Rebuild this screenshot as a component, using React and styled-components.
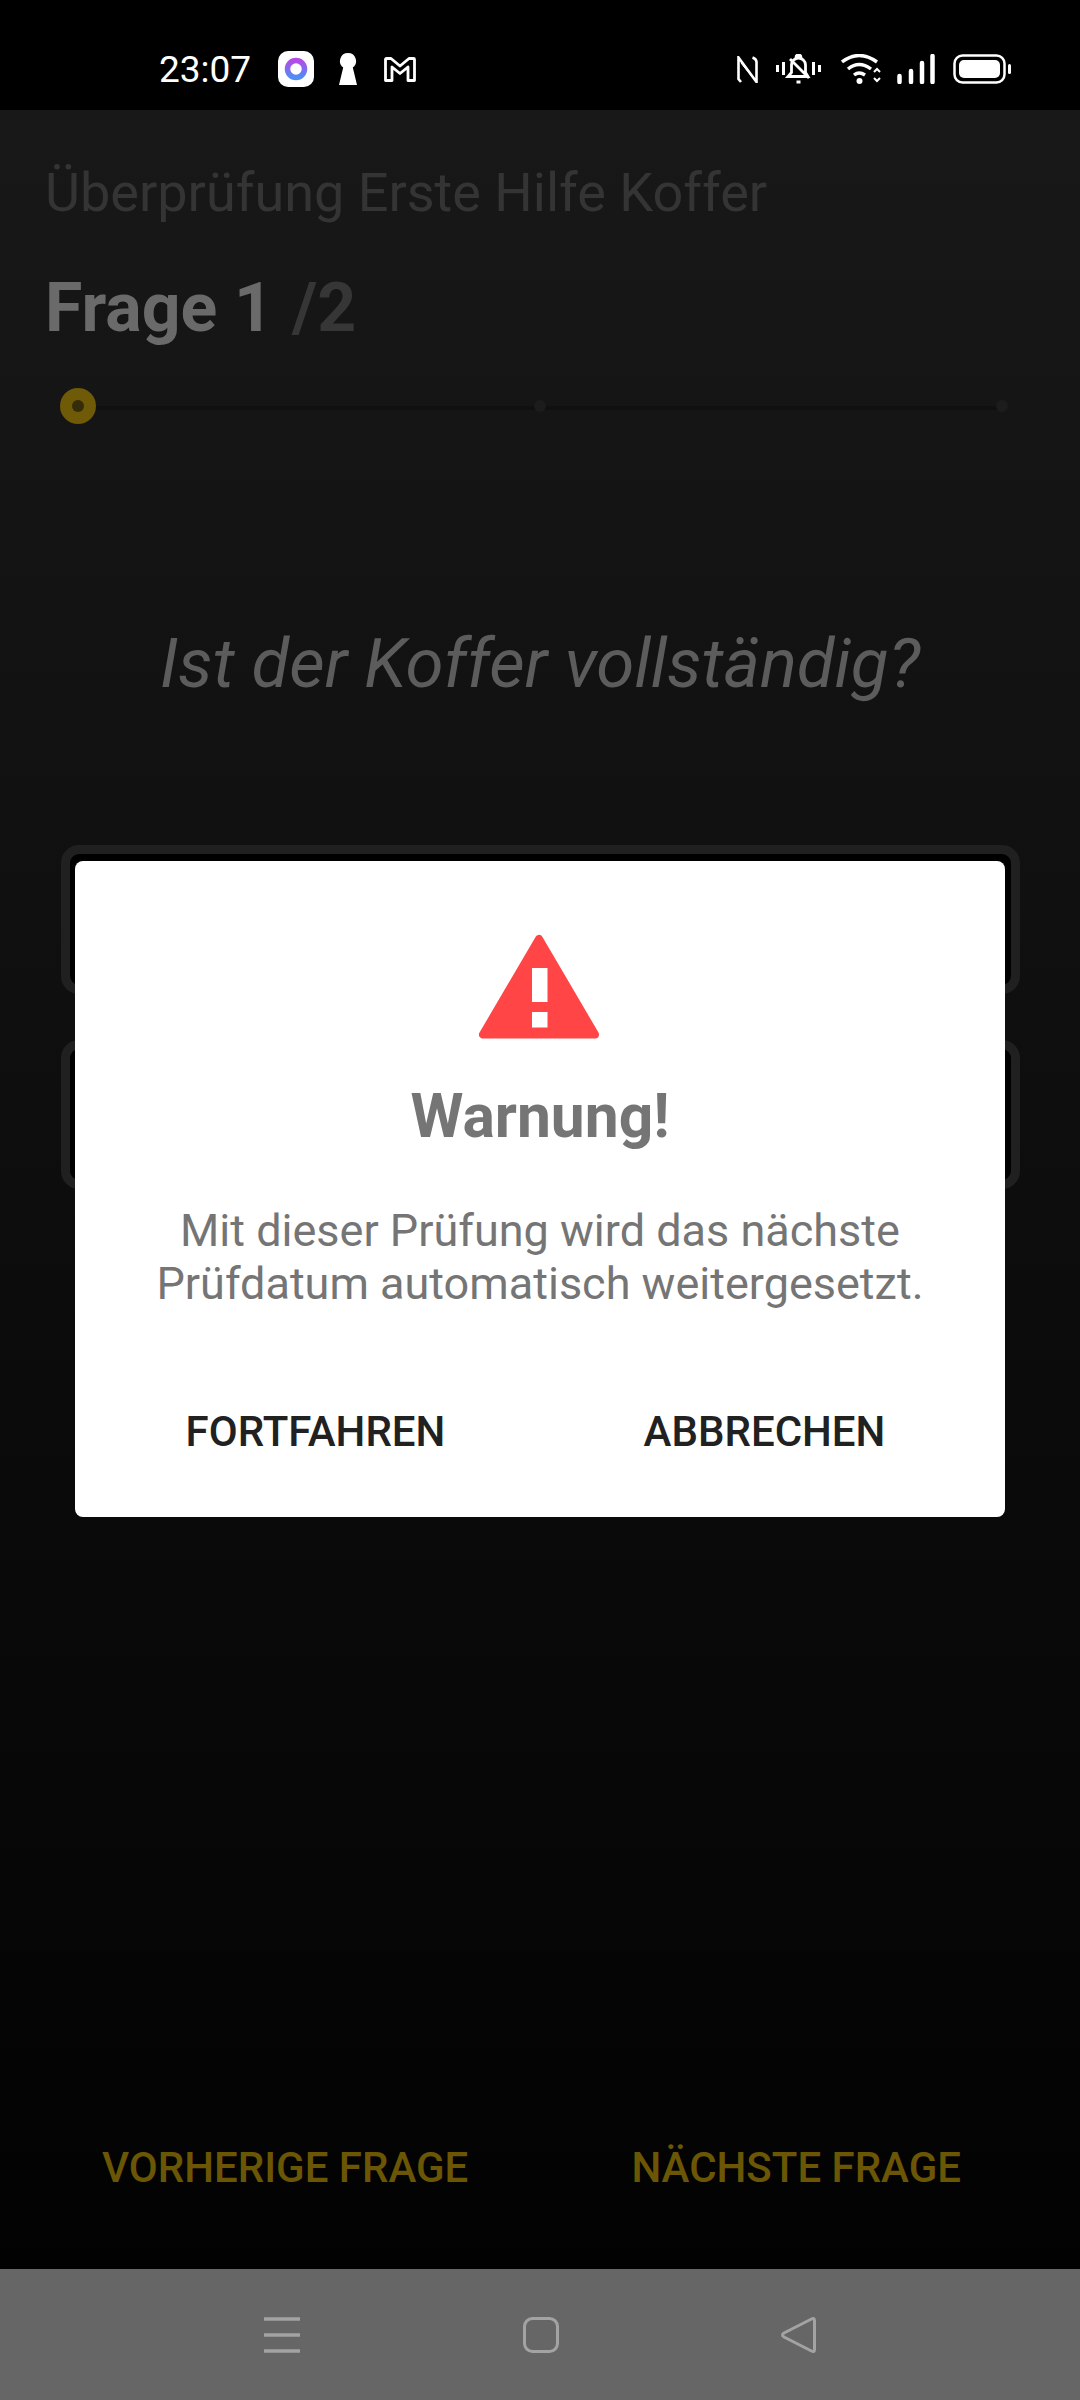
import React from "react";
import styled, { createGlobalStyle } from "styled-components";

const Global = createGlobalStyle`
  html, body { margin: 0; padding: 0; background: #000; }
  * { box-sizing: border-box; }
`;

const Screen = styled.div`
  width: 1080px;
  height: 2400px;
  display: flex;
  flex-direction: column;
  font-family: Roboto, "Liberation Sans", sans-serif;
  overflow: hidden;
`;

const StatusBar = styled.div`
  height: 110px;
  flex: none;
  background: #000;
  display: flex;
  align-items: center;
  justify-content: space-between;
  padding: 28px 69px 0 159px;
  color: #fff;
`;

const StatusGroup = styled.div`
  display: flex;
  align-items: center;
`;

const Clock = styled.span`
  font-size: 37px;
  font-weight: 400;
  width: 119px;
`;

const Main = styled.main`
  position: relative;
  flex: 1;
  background: linear-gradient(180deg, #181818 0%, #020202 100%);
  display: flex;
  flex-direction: column;
`;

const Title = styled.h1`
  margin: 53px 0 0 45px;
  font-size: 54px;
  line-height: 60px;
  font-weight: 400;
  color: #343434;
`;

const QuestionCount = styled.div`
  margin: 45px 0 0 45px;
  font-size: 68px;
  line-height: 80px;
  font-weight: 700;
  color: #6a6a6a;
  span { color: #363636; margin-left: 2px; }
`;

const Progress = styled.div`
  position: relative;
  margin: 40px 60px 0 60px;
  height: 36px;
  display: flex;
  align-items: center;
  justify-content: space-between;
  &::before {
    content: "";
    position: absolute;
    left: 18px;
    right: 18px;
    top: 18px;
    height: 4px;
    background: #101010;
  }
`;

const Step = styled.span`
  position: relative;
  border-radius: 50%;
  width: ${(p) => (p.$active ? 36 : 12)}px;
  height: ${(p) => (p.$active ? 36 : 12)}px;
  margin: 0 ${(p) => (p.$active ? 0 : 12)}px;
  background: ${(p) => (p.$active ? "#6f5a08" : "#1c1c1c")};
  display: flex;
  align-items: center;
  justify-content: center;
  &::after {
    content: "";
    display: ${(p) => (p.$active ? "block" : "none")};
    width: 12px;
    height: 12px;
    border-radius: 50%;
    background: #352c0a;
  }
`;

const Question = styled.h2`
  margin: 200px 0 0;
  text-align: center;
  font-size: 69px;
  line-height: 80px;
  font-weight: 400;
  font-style: italic;
  color: #5c5c5c;
`;

const Answers = styled.div`
  margin: 141px 60px 0 61px;
  display: flex;
  flex-direction: column;
  gap: 46px;
`;

const Answer = styled.div`
  height: 149px;
  border: 9px solid #202020;
  border-radius: 18px;
  background: #000;
`;

const Footer = styled.div`
  margin-top: auto;
  padding: 0 119px 77px 102px;
  display: flex;
  justify-content: space-between;
`;

const FooterButton = styled.span`
  font-size: 42px;
  line-height: 48px;
  font-weight: 500;
  color: #6b5605;
`;

const Dialog = styled.div`
  position: absolute;
  left: 75px;
  top: 751px;
  width: 930px;
  height: 656px;
  background: #fff;
  border-radius: 8px;
  display: flex;
  flex-direction: column;
  align-items: center;
  padding-top: 73px;
`;

const WarningIcon = styled.svg`
  width: 120px;
  height: 105px;
  margin-left: -2px;
  display: block;
`;

const DialogTitle = styled.h3`
  margin: 44px 0 0;
  font-size: 60.500px;
  line-height: 68px;
  font-weight: 700;
  color: #757575;
`;

const DialogText = styled.p`
  margin: 53px 0 0;
  text-align: center;
  font-size: 45px;
  line-height: 53px;
  font-weight: 400;
  color: #757575;
`;

const DialogActions = styled.div`
  margin-top: auto;
  width: 100%;
  padding: 0 0 61px;
  display: grid;
  grid-template-columns: 1fr 1fr;
`;

const DialogAction = styled.span`
  text-align: center;
  font-size: 42px;
  line-height: 48px;
  font-weight: 500;
  color: #212121;
  transform: translateX(${(p) => p.$shift}px);
`;

const NavBar = styled.nav`
  height: 131px;
  flex: none;
  background: #666;
  display: flex;
  align-items: center;
  justify-content: space-between;
  padding: 0 263px 0 264px;
`;

const Glyph = styled.svg`
  display: block;
  flex: none;
  margin-left: ${(p) => p.$left || 0}px;
`;

export default function App() {
  return (
    <Screen>
      <Global />
      <StatusBar>
        <StatusGroup>
          <Clock>23:07</Clock>
          <Glyph width="36" height="36" viewBox="0 0 36 36">
            <defs>
              <linearGradient id="ring" x1="0" y1="0" x2="0" y2="1">
                <stop offset="0" stopColor="#b44be8" />
                <stop offset="1" stopColor="#4f8df5" />
              </linearGradient>
            </defs>
            <rect width="36" height="36" rx="10" fill="#fff" />
            <circle cx="18" cy="18" r="8.500" fill="none" stroke="url(#ring)" strokeWidth="5.500" />
          </Glyph>
          <Glyph $left={25} width="18" height="32" viewBox="0 0 18 32">
            <path d="M9 0a8 8 0 0 1 4.800 14.400L18 32H0l4.200-17.600A8 8 0 0 1 9 0z" fill="#fff" />
          </Glyph>
          <Glyph $left={27} width="32" height="25" viewBox="0 0 32 25">
            <path d="M1.500 23.500V2.500q0-1 1-1h4.500L16 9l9-7.500h4.500q1 0 1 1v21h-6.500V10l-8 6.500L8 10v13.500z" fill="none" stroke="#fff" strokeWidth="2.800" strokeLinejoin="round" />
          </Glyph>
        </StatusGroup>
        <StatusGroup>
          <Glyph width="21" height="27" viewBox="0 0 21 27">
            <path d="M4 26L1.500 23V1.500L19.500 26V6q0-3-4-4.500" fill="none" stroke="#fff" strokeWidth="2.600" />
            <path d="M4 7l12 15" fill="none" stroke="#fff" strokeWidth="1" />
          </Glyph>
          <Glyph $left={18} width="45" height="30" viewBox="0 0 45 30">
            <path d="M1.500 11v7M7.500 8v13M37.500 8v13M43.500 11v7" stroke="#fff" strokeWidth="3" />
            <path d="M12 22.500h20l-2.500-4V11c0-4-3.500-7-7-7s-7 3-7 7v7.500zM20 3.500a2.500 2.500 0 0 1 5 0M20.500 28h4M14 5l19 19" fill="none" stroke="#fff" strokeWidth="2.800" />
          </Glyph>
          <Glyph $left={20} width="40" height="30" viewBox="0 0 40 30">
            <path d="M1 8q17-13 35 0M7 15q11-9 23 0M13 21q5-4 11 0" fill="none" stroke="#fff" strokeWidth="3.400" />
            <circle cx="18.500" cy="27" r="3" fill="#fff" />
            <path d="M33 18l3-3 3 3M33 24l3 3 3-3" fill="none" stroke="#fff" strokeWidth="2" />
          </Glyph>
          <Glyph $left={16} width="38" height="30" viewBox="0 0 38 30">
            <path d="M2.500 22v6M14 17v11M25 9v19M35.500 2v26" stroke="#fff" strokeWidth="4.500" strokeLinecap="round" />
          </Glyph>
          <Glyph $left={18} width="58" height="30" viewBox="0 0 58 30">
            <rect x="1.500" y="1.500" width="50" height="27" rx="8" fill="none" stroke="#fff" strokeWidth="2.500" />
            <rect x="6" y="6" width="41" height="18" rx="5" fill="#fff" />
            <rect x="55" y="10" width="3" height="10" rx="1.500" fill="#fff" />
          </Glyph>
        </StatusGroup>
      </StatusBar>
      <Main>
        <Title>Überprüfung Erste Hilfe Koffer</Title>
        <QuestionCount>
          Frage 1 <span>/2</span>
        </QuestionCount>
        <Progress>
          <Step $active />
          <Step />
          <Step />
        </Progress>
        <Question>Ist der Koffer vollständig?</Question>
        <Answers>
          <Answer />
          <Answer />
        </Answers>
        <Footer>
          <FooterButton>VORHERIGE FRAGE</FooterButton>
          <FooterButton>NÄCHSTE FRAGE</FooterButton>
        </Footer>
        <Dialog>
          <WarningIcon viewBox="0 0 120 105">
            <path d="M60 5L4 100.500h112z" fill="#ff4545" stroke="#ff4545" strokeWidth="8" strokeLinejoin="round" />
            <rect x="53" y="34" width="15.500" height="34" fill="#fff" />
            <rect x="53" y="78" width="15.500" height="15.500" fill="#fff" />
          </WarningIcon>
          <DialogTitle>Warnung!</DialogTitle>
          <DialogText>
            Mit dieser Prüfung wird das nächste
            <br />
            Prüfdatum automatisch weitergesetzt.
          </DialogText>
          <DialogActions>
            <DialogAction $shift={8}>FORTFAHREN</DialogAction>
            <DialogAction $shift={-8}>ABBRECHEN</DialogAction>
          </DialogActions>
        </Dialog>
      </Main>
      <NavBar>
        <Glyph width="36" height="36" viewBox="0 0 36 36">
          <path d="M0 2h36M0 18h36M0 34h36" stroke="#a3a3a3" strokeWidth="3.500" />
        </Glyph>
        <Glyph width="36" height="36" viewBox="0 0 36 36">
          <rect x="1.500" y="1.500" width="33" height="33" rx="8" fill="none" stroke="#a3a3a3" strokeWidth="3" />
        </Glyph>
        <Glyph width="36" height="36" viewBox="0 0 36 36">
          <path d="M33.500 3.500v29q0 3-3 1.500L3 20q-3-2 0-4l27.500-14q3-1.500 3 1.500z" fill="none" stroke="#a3a3a3" strokeWidth="3" strokeLinejoin="round" />
        </Glyph>
      </NavBar>
    </Screen>
  );
}
